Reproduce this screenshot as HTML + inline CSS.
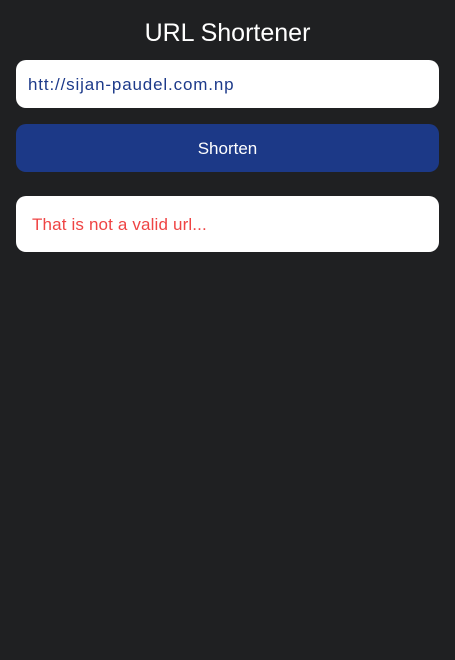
<!DOCTYPE html>
<html><head><style>
body{margin:0;background:#1f2022;width:455px;height:660px;font-family:"Liberation Sans",sans-serif;position:relative;overflow:hidden}
.t{position:absolute;top:17px;left:0;width:455px;text-align:center;color:#fff;font-size:25px;line-height:32px}
.box{position:absolute;left:16px;width:423px;border-radius:10px}
.in{top:60px;height:48px;background:#fff;color:#1d3a8a;font-size:17px;line-height:50px;padding-left:12px;box-sizing:border-box;letter-spacing:0.85px}
.btn{top:124px;height:48px;background:#1c3987;color:#fff;font-size:17px;line-height:50px;text-align:center}
.err{top:196px;height:56px;background:#fff;color:#ef4444;font-size:17px;line-height:58px;padding-left:16px;box-sizing:border-box;letter-spacing:0.15px}
</style></head><body>
<div class="t">URL Shortener</div>
<div class="box in">htt://sijan-paudel.com.np</div>
<div class="box btn">Shorten</div>
<div class="box err">That is not a valid url...</div>
</body></html>
